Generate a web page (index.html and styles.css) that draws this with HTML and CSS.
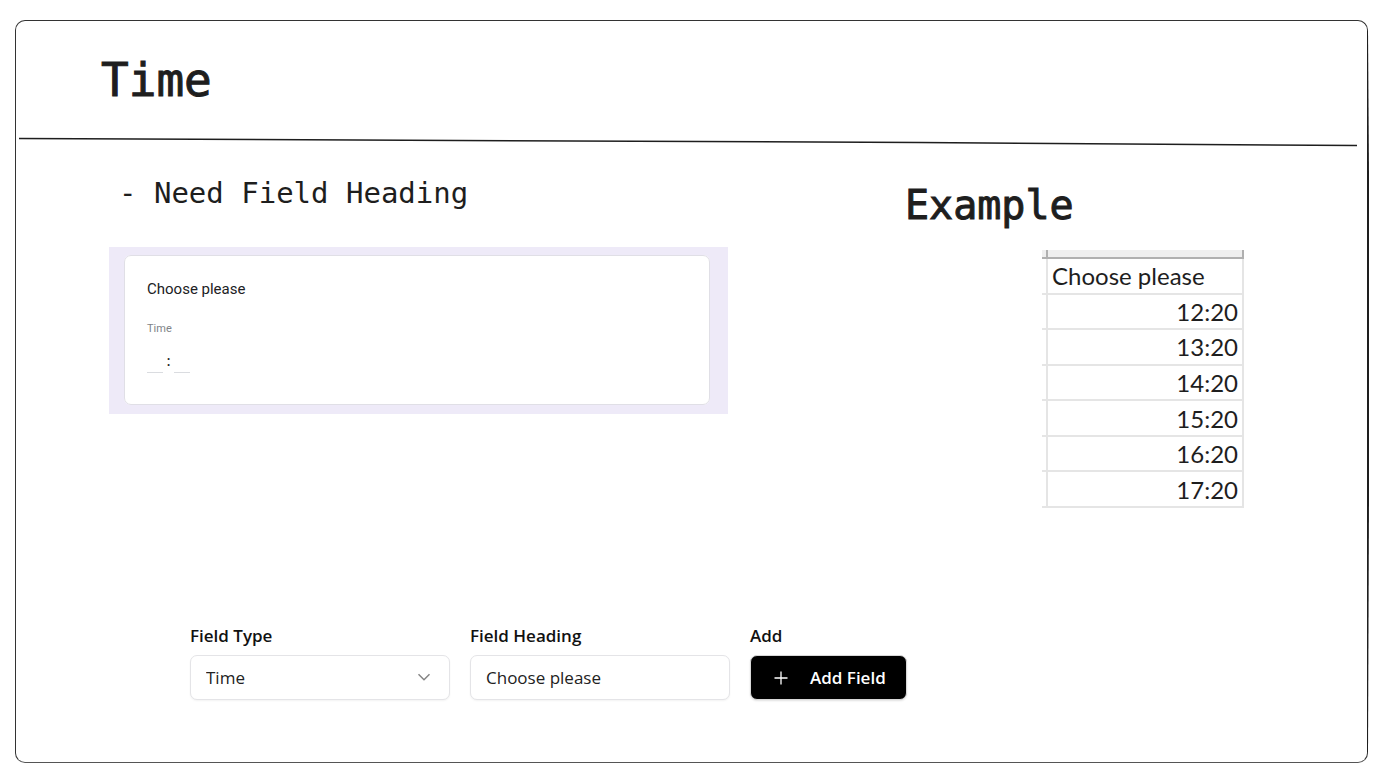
FILE: index.html
```html
<!DOCTYPE html>
<html lang="en">
<head>
<meta charset="utf-8">
<title>Time</title>
<meta name="viewport" content="width=device-width, initial-scale=1">
<link rel="stylesheet" href="styles.css">
</head>
<body>
<main class="frame">
  <span class="frame-stroke"></span>
  <header class="frame-header">
    <h1 class="title">Time</h1>
  </header>
  <svg class="divider" viewBox="0 0 1338 10" preserveAspectRatio="none" aria-hidden="true">
    <path d="M0 1.5 Q600 3.5 900 5.500 T1338 8.500" fill="none" stroke="#1e1e1e" stroke-width="1.5" vector-effect="non-scaling-stroke"/>
  </svg>
  <div class="content">
    <section class="question">
      <h2 class="note">- Need Field Heading</h2>
      <div class="preview">
        <fieldset class="card">
          <legend class="card-title">Choose please</legend>
          <span class="card-label">Time</span>
          <div class="time-entry">
            <input class="time-part" type="text" aria-label="Hour">
            <span class="colon">:</span>
            <input class="time-part" type="text" aria-label="Minute">
          </div>
        </fieldset>
      </div>
    </section>
    <section class="example">
      <h2 class="example-title">Example</h2>
      <table class="sheet">
        <thead>
          <tr class="sheet-top"><td class="gutter"></td><td></td></tr>
        </thead>
        <tbody>
          <tr><td class="gutter"></td><th class="sheet-heading" scope="col">Choose please</th></tr>
          <tr><td class="gutter"></td><td>12:20</td></tr>
          <tr><td class="gutter"></td><td>13:20</td></tr>
          <tr><td class="gutter"></td><td>14:20</td></tr>
          <tr><td class="gutter"></td><td>15:20</td></tr>
          <tr><td class="gutter"></td><td>16:20</td></tr>
          <tr><td class="gutter"></td><td>17:20</td></tr>
        </tbody>
      </table>
    </section>
  </div>
  <form class="builder">
    <div class="field">
      <label class="field-label" for="type">Field Type</label>
      <div class="select-wrap">
        <select class="control" id="type"><option>Time</option></select>
        <svg class="chevron" viewBox="0 0 14 8" aria-hidden="true"><path d="M1.500 1.200 L7 6.700 L12.500 1.200" fill="none" stroke="#858585" stroke-width="1.500"/></svg>
      </div>
    </div>
    <div class="field">
      <label class="field-label" for="heading">Field Heading</label>
      <input class="control" id="heading" type="text" value="Choose please">
    </div>
    <div class="field">
      <label class="field-label" for="add">Add</label>
      <button class="add-button" id="add" type="button">
        <svg class="plus" viewBox="0 0 14 14" aria-hidden="true"><path d="M7 0.500 V13.500 M0.500 7 H13.500" fill="none" stroke="#fff" stroke-width="1.300"/></svg>
        <span>Add Field</span>
      </button>
    </div>
  </form>
</main>
</body>
</html>
```
FILE: styles.css
```css
* { box-sizing: border-box; }

body {
  margin: 0;
  padding: 20px 20px 11px 15px;
  min-height: 100vh;
  display: flex;
  background: #fff;
  color: #1e1e1e;
}

.frame {
  position: relative;
  flex: 1;
  min-width: 0;
  border: 1px solid #333;
  border-bottom-color: #555;
  border-radius: 10px;
}

/* The right edge bows outward like a hand-drawn line. */
.frame-stroke {
  position: absolute;
  top: 10px;
  bottom: 10px;
  right: -2px;
  width: 2px;
  background: #1e1e1e;
  clip-path: polygon(0 0, 50% 0, 100% 20%, 100% 65%, 50% 100%, 0 100%);
}

.title, .note, .example-title {
  margin: 0;
  font-family: "DejaVu Sans Mono", monospace;
  font-weight: 400;
}

.title, .example-title { -webkit-text-stroke: 1px #1e1e1e; }

.frame-header { padding: 29px 85px 27px; }
.title { font-size: 46px; line-height: 60px; }

.divider {
  display: block;
  width: calc(100% - 13px);
  height: 10px;
  margin-left: 3px;
}

.content {
  display: grid;
  grid-template-columns: 619fr 339fr;
  gap: 177px;
  padding: 26px 123px 0 93px;
}

.note {
  padding-left: 10px;
  font-size: 29px;
  line-height: 40px;
}

.preview {
  margin-top: 34px;
  padding: 8px 18px 9px 15px;
  background: #eeeaf8;
}

.card {
  margin: 0;
  padding: 23px 22px 31px;
  border: 1px solid #e0dfe6;
  border-radius: 7px;
  background: #fff;
  font-family: Roboto, sans-serif;
}

.card-title {
  float: left;
  width: 100%;
  padding: 0;
  font-size: 15px;
  line-height: 20px;
  color: #202124;
}

.card-label {
  display: block;
  clear: both;
  padding-top: 22px;
  font-size: 11px;
  line-height: 16px;
  color: #808388;
}

.time-entry {
  display: flex;
  align-items: center;
  margin-top: 12px;
}

.time-part {
  width: 16px;
  height: 24px;
  padding: 0;
  border: 0;
  border-bottom: 1px solid #dadce0;
  background: none;
}

.colon {
  width: 11px;
  font-size: 14px;
  font-weight: 500;
  line-height: 20px;
  text-align: center;
}

.example-title {
  margin-top: 2px;
  font-size: 40px;
  line-height: 60px;
}

.sheet {
  width: 202px;
  height: 258px;
  margin: 15px 0 0 auto;
  border-spacing: 0;
  font-family: Lato, sans-serif;
  font-size: 24px;
  line-height: 32px;
}

.sheet td, .sheet th {
  padding: 1px 4px 0;
  border-right: 2px solid #e5e5e5;
  border-bottom: 2px solid #e5e5e5;
  font-weight: 400;
  text-align: right;
}

.sheet .sheet-heading { text-align: left; }
.sheet .gutter { width: 6px; padding: 0; }

.sheet .sheet-top td {
  height: 9px;
  padding: 0;
  border-color: #b0b0b0;
  background: #efefef;
}

.builder {
  display: flex;
  gap: 20px;
  margin: 116px 174px 61px;
  font-family: "Open Sans", "Noto Sans", sans-serif;
  font-size: 17px;
}

.field { display: flex; flex-direction: column; }

.field-label {
  margin-bottom: 7px;
  font-weight: 600;
  line-height: 24px;
  color: #111;
}

.select-wrap { position: relative; }

.control {
  display: block;
  width: 260px;
  height: 45px;
  padding: 0 15px;
  border: 1px solid #e4e4e7;
  border-radius: 7px;
  box-shadow: 0 1px 2px #0000000d;
  background: #fff;
  color: #222;
  font: inherit;
  appearance: none;
}

.chevron {
  position: absolute;
  right: 19px;
  top: 18px;
  width: 14px;
  height: 8px;
  pointer-events: none;
}

.add-button {
  display: flex;
  align-items: center;
  gap: 22px;
  height: 45px;
  padding: 0 20px 0 23px;
  border: 1px solid #d8d8d8;
  border-radius: 7px;
  box-shadow: 0 1px 2px #0000001f;
  background: #000;
  color: #fff;
  font: inherit;
  font-weight: 600;
  white-space: nowrap;
}

.plus { width: 14px; height: 14px; flex: none; }
```
